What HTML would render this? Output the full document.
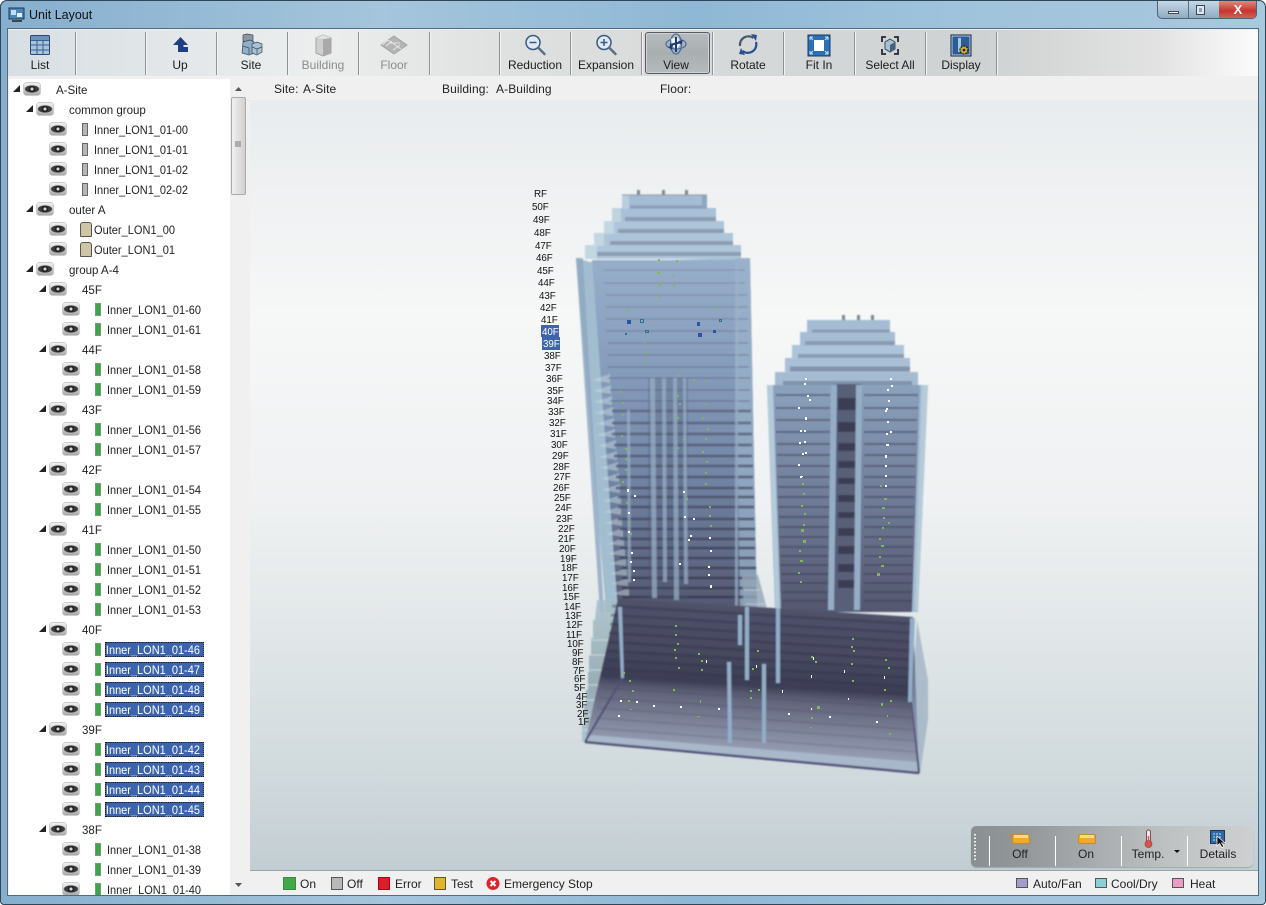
<!DOCTYPE html>
<html><head><meta charset="utf-8"><title>Unit Layout</title>
<style>
html,body{margin:0;padding:0;background:#fff}
body{width:1266px;height:905px;overflow:hidden;position:relative;font-family:"Liberation Sans",sans-serif;color:#222;font-size:12px}
#win{position:absolute;inset:0;border-radius:7px 7px 4px 4px;background:linear-gradient(90deg,#86afce 0,#a4c5dc 30%,#8fb8d6 55%,#9fc3dc 75%,#a8c8de 100%);box-shadow:inset 0 0 0 1px #2f4658}
#client{position:absolute;left:8px;top:29px;width:1250px;height:866px;background:#f0f0f0;box-shadow:0 0 0 1px #4f6b82}
.abs{position:absolute}
#tb{position:absolute;left:8px;top:30px;width:1250px;height:46px;background:linear-gradient(90deg,#d8dfe3 0,#eceeee 25%,#dfe1e1 40%,#d5d8d8 60%,#cfd2d2 78%,#e2e2e2 92%,#fbfbfb 100%)}
.sep{position:absolute;top:32px;height:43px;width:1px;background:#8d9295;box-shadow:1px 0 0 #f4f4f4}
.lb{position:absolute;top:58px;width:72px;text-align:center;font-size:12px;line-height:14px;color:#1c1c1c}
.dis{color:#8c8c8c}
#tree{position:absolute;left:9px;top:79px;width:221px;height:816px;overflow:hidden;background:#fff;font-size:12px}
.r{position:relative;height:20px;line-height:20px;white-space:nowrap}
.r b{position:absolute;top:6px;width:0;height:0;border-left:7px solid transparent;border-bottom:7px solid #222;margin-left:-1px}
.r i{position:absolute;top:4px;width:16px;height:12px;border-radius:2px;background:radial-gradient(circle at 50% 50%,#d5d5d5 0 1.3px,#222 1.8px 3px,transparent 3.4px),radial-gradient(ellipse 7.5px 3.8px at 50% 50%,#3b3b3b 0 88%,transparent 100%),linear-gradient(#f1f1f1,#a9a9a9);box-shadow:0 0 0 .5px #999}
.r em{position:absolute;top:4px;width:6px;height:13px;background:#3fa34d;border:1px solid #6f9f75;box-sizing:border-box}
.r em.g{background:#b5b5b5;border-color:#666}
.r em.o{top:3px;width:12px;height:15px;background:#cfc5a5;border-color:#555;border-radius:3px 3px 1px 1px}
.r span{position:absolute;top:1px;transform-origin:0 50%;transform:scaleX(.96)}
.y2 span,.y3 span{transform:scaleX(.915)}
.y2 span.ou{transform:scaleX(.92)}
.s span{background:#3c63ae;color:#fff;outline:1px dotted #111;outline-offset:-1px;height:15px;line-height:16px;top:3px;padding:0 1px;margin-left:-2px;width:106px}
.x0 b{left:5px}.x0 i{left:15px}.x0 span{left:47px}
.x1 b{left:18px}.x1 i{left:28px}.x1 span{left:60px}
.x2 b{left:31px}.x2 i{left:41px}.x2 span{left:73px}
.y2 i{left:41px}.y2 em{left:73px}.y2 span{left:85px}
.y3 i{left:54px}.y3 em{left:86px}.y3 span{left:98px}
#sb{position:absolute;left:230px;top:79px;width:17px;height:816px;background:#f0f0f0}
#thumb{position:absolute;left:1px;top:18px;width:15px;height:98px;background:linear-gradient(90deg,#f2f2f2,#cfcfcf);border-radius:2px;box-shadow:inset 0 0 0 1px #aaa}
#info{position:absolute;left:247px;top:78px;width:1011px;height:22px;background:#f0f0f0;line-height:22px;border-bottom:1px solid #e6e6e6;letter-spacing:.1px}
#info span{position:absolute;top:0}
#view{position:absolute;left:250px;top:100px;width:1008px;height:770px;background:linear-gradient(#e8ecee 0,#eff1f2 12%,#f6f7f7 28%,#eff1f2 52%,#dfe5e7 72%,#ccd6da 92%,#c2cdd2 100%)}
#st{position:absolute;left:250px;top:870px;width:1008px;height:25px;background:#f0f0f0;border-top:1px solid #9aa3a8;box-sizing:border-box}
.sw{position:absolute;width:12px;height:12px;box-sizing:border-box;border:1px solid #555}
.t{position:absolute;line-height:14px;color:#222}
#fl{position:absolute;left:971px;top:826px;width:282px;height:41px;border-radius:5px;background:linear-gradient(90deg,#8a8f91 0,#94989a 20%,#a9adaf 45%,#bfc2c3 70%,#cdcfd0 100%);box-shadow:0 1px 1px #9aa}
.fs{position:absolute;top:836px;height:30px;width:1px;background:#fff}
text{font-family:"Liberation Sans",sans-serif}
</style></head><body>
<div id="win">
<svg class="abs" style="left:8px;top:7px" width="18" height="16"><rect x="1" y="1" width="15" height="11" fill="#4a86b8" stroke="#1f3550"/><rect x="3" y="3" width="5" height="5" fill="#bfe0f2"/><path d="M9 6h5v4H9z" fill="#e5f0f7"/><path d="M4 14h10" stroke="#222" stroke-width="1.5"/></svg>
<div class="t" style="left:29px;top:8px;font-size:12.5px;color:#111">Unit Layout</div>
<!-- window controls -->
<div class="abs" style="left:1157px;top:1px;width:100px;height:18px;border-radius:0 0 5px 5px;border:1px solid #4c6478;border-top:0;box-sizing:border-box;overflow:hidden;background:linear-gradient(#c5d8e6,#8eabc2)">
<div class="abs" style="left:61px;top:0;width:38px;height:18px;background:linear-gradient(#dd8a80,#c4362c 55%,#d2695f)"></div>
<div class="abs" style="left:30px;top:0;width:1px;height:18px;background:#56708a"></div>
<div class="abs" style="left:10px;top:10px;width:11px;height:3px;background:#fff;border:1px solid #445;box-sizing:border-box"></div>
<div class="abs" style="left:38px;top:4px;width:9px;height:10px;background:#dde7ee;border:1px solid #445;box-sizing:border-box"></div>
<div class="abs" style="left:41px;top:7px;width:3px;height:4px;background:#8aa3b8"></div>
<div class="abs" style="left:61px;top:0;width:38px;text-align:center;font:bold 13px/17px 'Liberation Sans',sans-serif;color:#fff">X</div>
</div>
<div id="client"></div>
<div id="tb"></div>
<div class="sep" style="left:75px"></div><div class="sep" style="left:145px"></div><div class="sep" style="left:216px"></div><div class="sep" style="left:287px"></div><div class="sep" style="left:358px"></div><div class="sep" style="left:429px"></div><div class="sep" style="left:499px"></div><div class="sep" style="left:570px"></div><div class="sep" style="left:641px"></div><div class="sep" style="left:712px"></div><div class="sep" style="left:783px"></div><div class="sep" style="left:854px"></div><div class="sep" style="left:925px"></div><div class="sep" style="left:996px"></div>
<div class="abs" style="left:645px;top:32px;width:65px;height:42px;box-sizing:border-box;border:1px solid #555b60;border-radius:3px;background:linear-gradient(#b6bbbe,#a9aeb1 50%,#b5babc);box-shadow:inset 0 0 0 1px #cfd3d5"></div>
<svg class="abs" style="left:0;top:30px" width="1010" height="30">
<!-- List -->
<rect x="30.5" y="5.5" width="19" height="19" rx="1" fill="#a8c3dc" stroke="#2c4a78"/><path d="M31 10.5h18M31 15h18M31 20h18M37 11v13M43 11v13" stroke="#3c5f91" fill="none"/><rect x="31" y="6" width="18" height="4" fill="#6e91ba"/>
<!-- Up -->
<path d="M180.500 7 L173 15 H178 V22 H188 V17 H183.500 V15 H188 Z" fill="#1f3f85"/>
<!-- Site -->
<path d="M247 4l6 1v6l-6 1-4-1V5z" fill="#8b98a3" stroke="#3c4650" stroke-width=".7"/><path d="M243 12l7-2 4 2v11l-5 2-7-2z" fill="#8fb0cc" stroke="#3c4650" stroke-width=".7"/><path d="M252 14l5-2 5 2v8l-5 3-5-2z" fill="#a7c2d8" stroke="#3c4650" stroke-width=".7"/><path d="M243 16l6 2v6M252 17l5 2 5-2M257 19v5" stroke="#3c4650" fill="none" stroke-width=".7"/>
<!-- Building -->
<path d="M316 8l7-3 8 3v15l-8 3-7-3z" fill="#cfcfcf" stroke="#a3a3a3"/><path d="M323 9v17l8-3V8z" fill="#a9a9a9"/><path d="M316 8l8 1 7-1-8-3z" fill="#e1e1e1"/>
<!-- Floor -->
<path d="M394 6l13 9-13 9-13-9z" fill="#b4b4b4" stroke="#a3a3a3"/><path d="M388 10l13 9M382 15l6-5M386 16l6-5M393 20l7-5M389 13l11 0" stroke="#e6e6e6" fill="none"/>
<!-- Reduction -->
<circle cx="533" cy="12.500" r="7" fill="#dfe9f2" stroke="#3a5a84" stroke-width="1.500"/><path d="M529.500 12.500h7" stroke="#3a5a84" stroke-width="1.500"/><path d="M538.500 18l6 6" stroke="#5d6f82" stroke-width="2.500" stroke-linecap="round"/>
<!-- Expansion -->
<circle cx="604" cy="12.500" r="7" fill="#dfe9f2" stroke="#3a5a84" stroke-width="1.500"/><path d="M600.500 12.500h7M604 9v7" stroke="#3a5a84" stroke-width="1.500"/><path d="M609.500 18l6 6" stroke="#5d6f82" stroke-width="2.500" stroke-linecap="round"/>
<!-- View -->
<ellipse cx="676" cy="14" rx="5.500" ry="10" fill="none" stroke="#4b6fa0" stroke-width="1.300"/><ellipse cx="676" cy="14" rx="10" ry="5" fill="none" stroke="#4b6fa0" stroke-width="1.300"/><path d="M671 9l6-2 5 5-5 7-5-3z" fill="#f0f3f6"/><path d="M676 7v15M670 15l12-3" stroke="#1d3a78" stroke-width="2"/><path d="M668 17l5-2-1 5zM683 10l-5 1 3 4z" fill="#1d3a78"/>
<!-- Rotate -->
<path d="M740 16a8.500 8.500 0 0 1 13.500-8" fill="none" stroke="#44566d" stroke-width="2.200"/><path d="M756 12a8.500 8.500 0 0 1-13.500 9" fill="none" stroke="#2c4f8f" stroke-width="2.200"/><path d="M751 4l6 1-1 6zM745 25l-6-1 2-6z" fill="#2c4f8f"/>
<!-- Fit In -->
<rect x="808" y="5" width="22" height="21" fill="#2b6fb4" stroke="#1b3a66"/><rect x="814" y="10" width="10" height="11" fill="#fff"/><path d="M810 7l3 3M828 7l-3 3M810 24l3-3M828 24l-3-3M810 7h3M810 7v3M828 7h-3M828 7v3M810 24h3M810 24v-3M828 24h-3M828 24v-3" stroke="#cfe3f5" fill="none"/>
<!-- Select All -->
<path d="M886 7h-4v5M894 7h4v5M886 24h-4v-5M894 24h4v-5" fill="none" stroke="#20293a" stroke-width="1.800"/><path d="M890 9l5 3v7l-5 3-5-3v-7z" fill="#a9c0d2" stroke="#3b4c5e"/><path d="M890 15v7l5-3v-7z" fill="#42607f"/>
<!-- Display -->
<rect x="951" y="5" width="20" height="21" fill="#2a5c9a" stroke="#10233f"/><rect x="952" y="6" width="18" height="19" fill="none" stroke="#dfe7f0" stroke-width=".8"/><path d="M958 8h3v14h-3z" fill="#a9c8e0"/><circle cx="964" cy="20" r="4" fill="#c9a83a" stroke="#2b2b1a" stroke-width="1.500" stroke-dasharray="2 1"/><circle cx="964" cy="20" r="1.300" fill="#222"/>
</svg>
<div class="lb" style="left:4px">List</div><div class="lb" style="left:144px">Up</div><div class="lb" style="left:215px">Site</div><div class="lb dis" style="left:287px">Building</div><div class="lb dis" style="left:358px">Floor</div><div class="lb" style="left:499px">Reduction</div><div class="lb" style="left:570px">Expansion</div><div class="lb" style="left:640px">View</div><div class="lb" style="left:712px">Rotate</div><div class="lb" style="left:783px">Fit In</div><div class="lb" style="left:854px">Select All</div><div class="lb" style="left:925px">Display</div>

<div id="tree">
<div class="r x0"><b></b><i></i><span>A-Site</span></div>
<div class="r x1"><b></b><i></i><span>common group</span></div>
<div class="r y2"><i></i><em class="g"></em><span>Inner_LON1_01-00</span></div>
<div class="r y2"><i></i><em class="g"></em><span>Inner_LON1_01-01</span></div>
<div class="r y2"><i></i><em class="g"></em><span>Inner_LON1_01-02</span></div>
<div class="r y2"><i></i><em class="g"></em><span>Inner_LON1_02-02</span></div>
<div class="r x1"><b></b><i></i><span>outer A</span></div>
<div class="r y2"><i></i><em class="o" style="left:71px"></em><span class="ou">Outer_LON1_00</span></div>
<div class="r y2"><i></i><em class="o" style="left:71px"></em><span class="ou">Outer_LON1_01</span></div>
<div class="r x1"><b></b><i></i><span>group A-4</span></div>
<div class="r x2"><b></b><i></i><span>45F</span></div>
<div class="r y3"><i></i><em></em><span>Inner_LON1_01-60</span></div>
<div class="r y3"><i></i><em></em><span>Inner_LON1_01-61</span></div>
<div class="r x2"><b></b><i></i><span>44F</span></div>
<div class="r y3"><i></i><em></em><span>Inner_LON1_01-58</span></div>
<div class="r y3"><i></i><em></em><span>Inner_LON1_01-59</span></div>
<div class="r x2"><b></b><i></i><span>43F</span></div>
<div class="r y3"><i></i><em></em><span>Inner_LON1_01-56</span></div>
<div class="r y3"><i></i><em></em><span>Inner_LON1_01-57</span></div>
<div class="r x2"><b></b><i></i><span>42F</span></div>
<div class="r y3"><i></i><em></em><span>Inner_LON1_01-54</span></div>
<div class="r y3"><i></i><em></em><span>Inner_LON1_01-55</span></div>
<div class="r x2"><b></b><i></i><span>41F</span></div>
<div class="r y3"><i></i><em></em><span>Inner_LON1_01-50</span></div>
<div class="r y3"><i></i><em></em><span>Inner_LON1_01-51</span></div>
<div class="r y3"><i></i><em></em><span>Inner_LON1_01-52</span></div>
<div class="r y3"><i></i><em></em><span>Inner_LON1_01-53</span></div>
<div class="r x2"><b></b><i></i><span>40F</span></div>
<div class="r y3 s"><i></i><em></em><span>Inner_LON1_01-46</span></div>
<div class="r y3 s"><i></i><em></em><span>Inner_LON1_01-47</span></div>
<div class="r y3 s"><i></i><em></em><span>Inner_LON1_01-48</span></div>
<div class="r y3 s"><i></i><em></em><span>Inner_LON1_01-49</span></div>
<div class="r x2"><b></b><i></i><span>39F</span></div>
<div class="r y3 s"><i></i><em></em><span>Inner_LON1_01-42</span></div>
<div class="r y3 s"><i></i><em></em><span>Inner_LON1_01-43</span></div>
<div class="r y3 s"><i></i><em></em><span>Inner_LON1_01-44</span></div>
<div class="r y3 s"><i></i><em></em><span>Inner_LON1_01-45</span></div>
<div class="r x2"><b></b><i></i><span>38F</span></div>
<div class="r y3"><i></i><em></em><span>Inner_LON1_01-38</span></div>
<div class="r y3"><i></i><em></em><span>Inner_LON1_01-39</span></div>
<div class="r y3"><i></i><em></em><span>Inner_LON1_01-40</span></div>
</div>
<div id="sb"><div id="thumb"></div>
<svg class="abs" style="left:0;top:0" width="17" height="816"><path d="M5 12l3.500-4 3.500 4z" fill="#555"/><path d="M5 804l3.500 4 3.500-4z" fill="#555"/><path d="M5 63h6M5 65h6M5 67h6" stroke="#777"/></svg>
</div>

<div id="info"><span style="left:27px">Site:</span><span style="left:56px">A-Site</span><span style="left:195px">Building:</span><span style="left:249px">A-Building</span><span style="left:413px">Floor:</span></div>
<div id="view"></div>

<svg class="abs" style="left:0;top:0" width="1266" height="905">
<defs>
<filter id="bl" x="-5%" y="-5%" width="110%" height="110%"><feGaussianBlur stdDeviation=".7"/></filter>
<filter id="bd" x="-5%" y="-5%" width="110%" height="110%"><feGaussianBlur stdDeviation=".25"/></filter>
<linearGradient id="gL" x1="0" y1="258" x2="0" y2="612" gradientUnits="userSpaceOnUse"><stop offset="0" stop-color="#97aeca"/><stop offset=".3" stop-color="#879dbc"/><stop offset=".6" stop-color="#7386a6"/><stop offset=".85" stop-color="#5f6985"/><stop offset="1" stop-color="#54566f"/></linearGradient>
<linearGradient id="gR" x1="0" y1="385" x2="0" y2="612" gradientUnits="userSpaceOnUse"><stop offset="0" stop-color="#8ba2bd"/><stop offset=".45" stop-color="#727f9b"/><stop offset="1" stop-color="#54566f"/></linearGradient>
<linearGradient id="gB" x1="750" y1="606" x2="740" y2="768" gradientUnits="userSpaceOnUse"><stop offset="0" stop-color="#50526a"/><stop offset=".3" stop-color="#46485f"/><stop offset=".48" stop-color="#3b3d54"/><stop offset=".56" stop-color="#5f6278"/><stop offset=".72" stop-color="#7a7f96"/><stop offset=".88" stop-color="#939bb0"/><stop offset="1" stop-color="#a9b8c8"/></linearGradient>
<linearGradient id="ln" x1="0" y1="258" x2="0" y2="600" gradientUnits="userSpaceOnUse"><stop offset="0" stop-color="#7a89a2"/><stop offset=".5" stop-color="#525a75"/><stop offset="1" stop-color="#33354c"/></linearGradient>
<linearGradient id="stp" x1="0" y1="600" x2="0" y2="745" gradientUnits="userSpaceOnUse"><stop offset="0" stop-color="#a7bfc8"/><stop offset=".6" stop-color="#8da3ad"/><stop offset="1" stop-color="#a9c2cf"/></linearGradient>
</defs>

<g filter="url(#bl)">
<!-- left tower crown -->
<g>
<rect x="585" y="245" width="156" height="14" fill="#afc6da"/><path d="M595 254H741" stroke="#8c9cb4" stroke-width="4"/><rect x="585" y="245" width="12" height="14" fill="#c3d7e1"/>
<rect x="594" y="233" width="139" height="13" fill="#adc4d9"/><path d="M610 243H733" stroke="#8c9cb4" stroke-width="4"/><rect x="594" y="233" width="10" height="13" fill="#c3d7e1"/>
<rect x="604" y="221" width="120" height="13" fill="#adc4d9"/><path d="M618 231H724" stroke="#8c9cb4" stroke-width="4"/><rect x="604" y="221" width="10" height="13" fill="#c3d7e1"/>
<rect x="612" y="208" width="104" height="14" fill="#a9c0d8"/><path d="M625 219H716" stroke="#8c9cb4" stroke-width="4"/><rect x="612" y="208" width="9" height="14" fill="#c0d4df"/>
<rect x="622" y="195" width="85" height="14" fill="#a5bcd5"/><path d="M630 207H707" stroke="#8c9cb4" stroke-width="3"/><rect x="622" y="195" width="7" height="14" fill="#b9cedb"/><rect x="702" y="195" width="5" height="14" fill="#8fa6c0"/>
<path d="M637 190h3v5h-3zM662 190h3v5h-3zM685 190h3v5h-3z" fill="#7d8792"/><path d="M622 195H707" stroke="#8d98a8"/>
</g>
<!-- left tower body -->
<path d="M576 258L590 262L750 258L757 612H606Z" fill="#a3bdd0"/>
<path d="M592 260L750 260L757 612H618Z" fill="url(#gL)"/>
<path d="M576 258L583 258L604 612H600Z" fill="#8ca6bf" opacity=".8"/>
<path d="M735 258H750L757 612H740Z" fill="#9ab2c9" opacity=".75"/>
<path d="M592 380l18-6v9zM593 391l18-6v9zM594 402l18-6v9zM595 413l18-6v9zM596 424l18-6v9zM597 435l18-6v9zM598 446l18-6v9zM599 457l18-6v9zM600 468l18-6v9zM601 479l18-6v9zM602 490l18-6v9zM603 501l18-6v9zM604 512l17-6v9zM605 523l17-6v9zM606 534l17-6v9zM607 544l17-6v8zM608 554l17-6v8zM609 564l17-6v8zM610 574l17-6v8zM611 584l17-6v8zM612 594l17-6v8z" fill="#cfe2e6" opacity=".45"/>
<path d="M604 270H745M604 283H745M606 295H747M606 307H748M606 319H748M606 331H748M608 343H748M608 355H749M608 367H749M608 378H750M610 390H750M610 401H750" stroke="url(#ln)" stroke-width="1.300" opacity=".65" fill="none"/>
<path d="M612 411H751M612 423H751M612 434H752M614 445H752M614 456H752M616 466H753M616 477H753M616 488H753M618 497H754M618 507H754M618 519H754M620 529H755M620 539H755M620 548H755M620 558H755M622 568H756M622 578H756M622 588H756M622 597H757" stroke="url(#ln)" stroke-width="2.800" opacity=".75" fill="none"/>
<path d="M648 378h40v222h-40z" fill="#4d5570" opacity=".28"/>
<!-- left tower columns -->
<path d="M627 410h3l1 172h-3zM650 378h5l2 220h-5zM662 378h4l1 204h-4zM673 378h4l2 222h-5zM683 378h3l2 206h-4zM735 260h3l0 353h-3z" fill="#9ab2c9" opacity=".7"/>

<!-- right tower crown -->
<rect x="775" y="372" width="143" height="14" fill="#a4bbd2"/><path d="M783 383H912" stroke="#8293ac" stroke-width="4"/>
<rect x="785" y="358" width="125" height="15" fill="#a9c0d6"/><path d="M790 369H910" stroke="#8293ac" stroke-width="5"/>
<rect x="792" y="345" width="112" height="14" fill="#aec4da"/><path d="M798 356H904" stroke="#8a9bb4" stroke-width="4"/>
<rect x="800" y="332" width="95" height="14" fill="#a6bdd4"/><path d="M805 343H895" stroke="#8a9bb4" stroke-width="4"/>
<rect x="807" y="320" width="83" height="13" fill="#a5bcd4"/><path d="M812 331H890" stroke="#8a9bb4" stroke-width="3"/>
<path d="M842 315h3v5h-3zM857 315h3v5h-3zM871 315h3v5h-3z" fill="#7d8792"/>
<!-- right tower body -->
<path d="M767 385H928L918 612H775Z" fill="#a4bcd1"/>
<path d="M773 385H920L912 612H781Z" fill="url(#gR)"/>
<path d="M836 384H861L858 612H834Z" fill="#585e78"/>
<path d="M838 398H859v12H838zM838 422H859v10H838zM838 443H859v8H838zM838 461H859v7H838zM838 478H859v6H838zM838 495H858v7H838zM838 512H858v6H838zM838 528H858v8H838zM838 546H858v8H838zM838 564H857v8H838zM838 580H857v8H838z" fill="#3a3c54"/>
<path d="M776 395H830M864 395H918M776 408H830M864 408H918M776 420H830M864 420H917M776 432H830M864 432H917M777 444H830M864 444H916M777 455H830M864 455H916M777 466H830M864 466H915M778 477H830M864 477H915M778 487H830M864 487H915M778 497H830M864 497H914M778 507H830M864 507H914M779 517H830M864 517H914M779 527H830M864 527H913M779 537H830M864 537H913M780 547H830M864 547H913M780 556H830M864 556H912M780 565H830M864 565H912M781 574H830M864 574H912M781 583H830M864 583H912M781 592H830M864 592H912M782 601H830M864 601H912" stroke="#3a3e58" stroke-width="2" opacity=".5"/>
<path d="M831 385h6l-3 225h-6zM856 385h6l-2 225h-6z" fill="#95aec6"/>
<path d="M767 385h6l6 225h-3zM922 385h6l-10 225h-3z" fill="#b8cedb" opacity=".85"/>

<!-- base stairs -->
<path d="M597 600H622L590 742H582V724H584V706H586V690H588V672H589V655H591V638H593V620H595Z" fill="url(#stp)" opacity=".85"/>
<path d="M590 640h30M587 655h30M586 670h30M584 685h28M583 700h26M582 715h22M582 730h14" stroke="#cfe0e4" stroke-width="1.500" opacity=".6"/>
<!-- between towers stairs -->
<path d="M742 575H758L770 620L758 660H746Z" fill="#93a5b8" opacity=".8"/>
<path d="M744 590h16M746 604h20M748 618h20M748 632h16" stroke="#c5d5de" opacity=".7"/>
<!-- base -->
<path d="M618 598L913 617L919 773L585 742Z" fill="url(#gB)"/>
<path d="M612 606L913 624M611 615L913 633M610 624L914 642M609 633L914 651M608 642L914 660M607 651L915 669M606 660L915 678M605 669L915 687" stroke="#2f3149" stroke-width="3" opacity=".38" fill="none"/>
<path d="M604 678L916 696M602 688L916 708M600 698L917 718M598 708L917 730M596 718L918 741M593 728L918 752" stroke="#2f3149" stroke-width="2" opacity=".14" fill="none"/>
<path d="M590 735L917 762L919 773L585 742Z" fill="#a8b7c9"/>
<path d="M585 742L919 773" stroke="#55557d" stroke-width="2.500"/>
<path d="M623 677L585 742M912 702L919 773" stroke="#4f4f78" stroke-width="2"/>
<path d="M917 620L928 680V720L920 773L912 702Z" fill="#93a8bc" opacity=".65"/>
<path d="M618 607h4l2 71h-3zM745 607h4v73h-4zM776 608h4v75h-4zM910 618h5l-3 84h-4zM727 662h4l1 81h-4zM762 664h4v79h-4z" fill="#93adc8"/>
<rect x="738" y="615" width="4" height="30" fill="#93adc8"/>
</g>

<g filter="url(#bd)">
<!-- green dots -->
<path fill="#7fb85a" d="M658 259h2v2h-2zM676 260h2v2h-2zM657 272h3v2h-3zM672 275h2v1h-2zM658 284h3v2h-3zM673 285h2v2h-2zM658 296h2v2h-2zM626 309h2v2h-2zM639 310h1v1h-1zM716 307h2v2h-2zM644 341h2v2h-2zM644 352h2v2h-2zM644 362h2v2h-2zM678 374h2v2h-2zM693 379h2v2h-2zM704 381h2v1h-2zM620 391h2v2h-2zM677 395h2v2h-2zM622 402h2v2h-2zM679 403h2v2h-2zM704 404h2v1h-2zM622 414h2v2h-2zM677 417h2v2h-2zM702 417h2v2h-2zM707 428h2v2h-2zM621 435h2v2h-2zM683 438h2v2h-2zM705 438h2v2h-2zM625 448h2v2h-2zM677 447h2v2h-2zM702 451h2v2h-2zM625 458h2v2h-2zM706 461h2v2h-2zM625 469h2v2h-2zM705 472h2v2h-2zM622 481h2v2h-2zM705 483h2v2h-2zM626 502h2v2h-2zM686 498h2v2h-2zM628 512h2v2h-2zM709 506h2v2h-2zM628 522h2v2h-2zM709 515h2v2h-2zM630 533h2v2h-2zM710 525h2v2h-2zM802 483h2v2h-2zM880 485h2v2h-2zM803 493h2v2h-2zM884 498h3v2h-3zM801 505h2v2h-2zM882 507h3v2h-3zM804 513h2v2h-2zM883 517h2v2h-2zM803 524h2v2h-2zM888 522h2v2h-2zM801 529h3v3h-3zM882 527h2v2h-2zM803 540h3v3h-3zM879 538h2v2h-2zM799 550h2v2h-2zM881 545h3v2h-3zM800 560h3v2h-3zM879 556h2v2h-2zM798 572h2v2h-2zM881 565h3v2h-3zM800 581h2v2h-2zM877 573h3v3h-3zM675 625h2v2h-2zM675 634h2v2h-2zM677 643h2v2h-2zM698 653h2v2h-2zM674 649h2v2h-2zM701 660h2v2h-2zM675 657h2v2h-2zM701 669h2v2h-2zM678 667h2v2h-2zM623 672h2v2h-2zM629 680h2v2h-2zM673 689h2v2h-2zM632 690h2v2h-2zM628 700h2v2h-2zM700 700h1v3h-1zM630 709h2v1h-2zM697 716h3v1h-3zM750 690h2v2h-2zM758 689h2v2h-2zM750 697h2v2h-2zM752 668h2v2h-2zM757 650h2v2h-2zM811 656h2v2h-2zM815 661h2v2h-2zM851 663h2v2h-2zM852 638h2v2h-2zM851 646h2v2h-2zM853 650h2v2h-2zM885 659h2v2h-2zM888 667h2v2h-2zM852 680h2v2h-2zM884 689h2v2h-2zM890 700h2v2h-2zM881 703h2v3h-2zM817 706h3v3h-3zM811 717h2v2h-2zM887 715h1v2h-1zM889 733h2v2h-2zM810 727h2v1h-2z"/>
<!-- white dots -->
<path fill="#fff" d="M805 378h2v2h-2zM890 378h2v2h-2zM804 383h2v2h-2zM891 385h2v2h-2zM807 395h2v2h-2zM887 389h2v2h-2zM809 399h2v2h-2zM888 400h2v2h-2zM798 407h2v2h-2zM886 408h2v2h-2zM805 417h2v3h-2zM885 410h2v2h-2zM800 430h2v2h-2zM887 421h2v2h-2zM804 430h2v2h-2zM890 431h2v2h-2zM799 442h2v2h-2zM886 433h2v2h-2zM804 441h2v2h-2zM886 444h3v2h-3zM802 453h2v2h-2zM885 455h2v3h-2zM805 452h2v2h-2zM885 465h2v2h-2zM798 464h2v2h-2zM885 475h2v2h-2zM801 476h2v1h-2zM885 485h2v2h-2zM800 476h2v2h-2zM627 489h2v2h-2zM627 491h2v1h-2zM634 495h2v2h-2zM683 491h2v2h-2zM628 512h2v2h-2zM628 531h2v2h-2zM684 516h2v2h-2zM693 518h2v2h-2zM690 535h2v2h-2zM688 539h2v2h-2zM709 537h2v2h-2zM631 552h2v2h-2zM710 550h2v2h-2zM630 561h2v2h-2zM679 563h2v2h-2zM708 566h2v2h-2zM633 570h2v2h-2zM708 574h2v2h-2zM633 579h2v2h-2zM710 585h2v3h-2zM620 700h2v2h-2zM636 701h2v2h-2zM618 715h2v2h-2zM680 706h2v2h-2zM718 708h2v2h-2zM788 713h2v2h-2zM829 716h2v2h-2zM876 721h2v2h-2zM653 705h2v2h-2zM706 660h1v3h-1zM756 665h1v3h-1zM811 675h1v3h-1zM813 657h1v3h-1zM844 670h1v3h-1zM884 676h1v3h-1zM811 708h1v2h-1zM782 690h1v3h-1zM848 698h1v2h-1z"/>
<!-- selected units -->
<path fill="#2a55a5" d="M627 320h4v4h-4zM697 322h3v4h-3zM698 333h4v4h-4zM713 330h3v3h-3z"/>
<path fill="none" stroke="#2f6f90" d="M640.500 319.500h3v3h-3zM645.500 330.500h3v2h-3zM719.500 319.500h2v2h-2zM625.500 333.500h1v1h-1z"/>
</g>

<!-- floor labels -->
<rect x="541" y="325" width="18" height="12" fill="#3e63b0"/><rect x="542" y="337" width="18" height="13" fill="#3e63b0"/>
<g font-size="9.800" fill="#111" letter-spacing="-.1">
<text x="534" y="197">RF</text><text x="532" y="210">50F</text><text x="533" y="223">49F</text><text x="534" y="236">48F</text><text x="535" y="249">47F</text><text x="536" y="261">46F</text><text x="537" y="274">45F</text><text x="538" y="286">44F</text><text x="539" y="299">43F</text><text x="540" y="311">42F</text><text x="541" y="323">41F</text>
<text x="542" y="335" fill="#fff">40F</text><text x="543" y="347" fill="#fff">39F</text>
<text x="544" y="359">38F</text><text x="545" y="371">37F</text><text x="546" y="382">36F</text><text x="547" y="394">35F</text><text x="547" y="404">34F</text><text x="548" y="415">33F</text><text x="549" y="426">32F</text><text x="550" y="437">31F</text><text x="551" y="448">30F</text><text x="552" y="459">29F</text><text x="553" y="470">28F</text><text x="554" y="480">27F</text><text x="553" y="491">26F</text><text x="554" y="501">25F</text><text x="555" y="511">24F</text><text x="556" y="522">23F</text><text x="558" y="532">22F</text><text x="558" y="542">21F</text><text x="559" y="552">20F</text><text x="560" y="562">19F</text><text x="561" y="571">18F</text><text x="562" y="581">17F</text><text x="562" y="591">16F</text><text x="563" y="600">15F</text><text x="564" y="610">14F</text><text x="565" y="619">13F</text><text x="566" y="628">12F</text><text x="566" y="638">11F</text><text x="567" y="647">10F</text><text x="572" y="656">9F</text><text x="572" y="665">8F</text><text x="573" y="674">7F</text><text x="574" y="682">6F</text><text x="574" y="691">5F</text><text x="576" y="700">4F</text><text x="576" y="708">3F</text><text x="577" y="717">2F</text><text x="578" y="725">1F</text>
</g>
</svg>

<!-- floating bar -->
<div id="fl"></div>
<div class="fs" style="left:989px"></div><div class="fs" style="left:1055px"></div><div class="fs" style="left:1121px"></div><div class="fs" style="left:1187px"></div>
<svg class="abs" style="left:970px;top:826px" width="290" height="42">
<path d="M5 8v27" stroke="#f2f2f2" stroke-width="2" stroke-dasharray="1.500 2"/>
<rect x="42.500" y="8.500" width="17" height="9" rx="1.500" fill="#f0a830" stroke="#c98a2a"/><rect x="44" y="9" width="14" height="3" fill="#fbd98a"/>
<rect x="108.500" y="8.500" width="17" height="9" rx="1.500" fill="#f0a830" stroke="#c98a2a"/><rect x="110" y="9" width="14" height="3" fill="#fbd98a"/>
<rect x="176.500" y="4" width="4" height="13" rx="2" fill="#eee" stroke="#8b4a44"/><circle cx="178.500" cy="18" r="3.500" fill="#d9534a" stroke="#8b4a44" stroke-width=".7"/><path d="M178.500 10v8" stroke="#d9534a" stroke-width="1.500"/>
<path d="M204 24h6l-3 3z" fill="#111"/>
<rect x="240.500" y="4.500" width="14" height="13" fill="#2b6aa8" stroke="#1c3a5e"/><path d="M243 8h9M243 11h9M243 14h6" stroke="#cfe3f2" stroke-dasharray="2 1"/><path d="M247 10l0 10 2.500-2.500 2.500 4 2-1-2.500-3.500h3.500z" fill="#111" stroke="#fff" stroke-width=".7"/>
</svg>
<div class="t" style="left:1000px;top:847px;width:40px;text-align:center">Off</div>
<div class="t" style="left:1066px;top:847px;width:40px;text-align:center">On</div>
<div class="t" style="left:1128px;top:847px;width:40px;text-align:center">Temp.</div>
<div class="t" style="left:1198px;top:847px;width:40px;text-align:center">Details</div>

<!-- status -->
<div id="st"></div>
<div class="sw" style="left:283px;top:877px;width:13px;height:13px;background:#43a84a;border-color:#3c8a42"></div><div class="t" style="left:300px;top:877px">On</div>
<div class="sw" style="left:331px;top:877px;background:#b9b9b9;height:13px"></div><div class="t" style="left:347px;top:877px">Off</div>
<div class="sw" style="left:378px;top:877px;background:#dc1f2a;height:13px;border-color:#a02"></div><div class="t" style="left:395px;top:877px">Error</div>
<div class="sw" style="left:434px;top:877px;background:#e0b52c;height:13px"></div><div class="t" style="left:451px;top:877px">Test</div>
<svg class="abs" style="left:486px;top:876px" width="15" height="15"><circle cx="7" cy="7.500" r="6.500" fill="#d8262f"/><path d="M4.500 5l5 5M9.500 5l-5 5" stroke="#fff" stroke-width="2"/></svg><div class="t" style="left:504px;top:877px">Emergency Stop</div>
<div class="sw" style="left:1016px;top:878px;height:10px;background:#a49ccb"></div><div class="t" style="left:1033px;top:877px">Auto/Fan</div>
<div class="sw" style="left:1095px;top:878px;height:10px;background:#8ccfd6"></div><div class="t" style="left:1111px;top:877px">Cool/Dry</div>
<div class="sw" style="left:1172px;top:878px;height:10px;background:#ec9cc4"></div><div class="t" style="left:1190px;top:877px">Heat</div>
</div>
</body></html>
